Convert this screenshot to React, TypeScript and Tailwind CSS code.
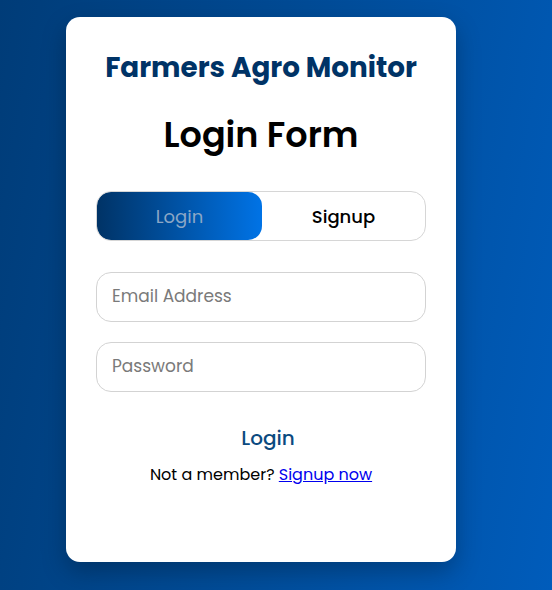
import React from "react";

export default function App() {
  return (
    <div
      className="min-h-[590px] w-full bg-[linear-gradient(100deg,#003c78_0%,#004c98_50%,#005cbb_100%)] pt-[17px] pl-[66px]"
      style={{ fontFamily: "Poppins, Inter, 'Noto Sans', sans-serif" }}
    >
      <div className="w-[390px] h-[545px] rounded-[14px] bg-white shadow-[0_10px_25px_rgba(0,0,0,0.25)] px-[30px] pt-[33px] flex flex-col items-center">
        <h1 className="text-[27.8px] leading-[36px] font-bold text-[#003366]">
          Farmers Agro Monitor
        </h1>
        <h2 className="mt-[24px] text-[35px] leading-[50px] font-semibold text-black">
          Login Form
        </h2>
        <div className="mt-[31px] w-[330px] h-[50px] rounded-[15px] border border-[#d6d6d6] flex overflow-hidden">
          <div className="w-[165px] h-full rounded-[14px] bg-[linear-gradient(to_right,#003366,#0073e6)] flex items-center justify-center text-[18px] text-[#8ba7c6]">
            Login
          </div>
          <div className="flex-1 flex items-center justify-center text-[18px] font-medium text-black">
            Signup
          </div>
        </div>
        <div className="mt-[31px] w-[330px] h-[50px] rounded-[15px] border border-[#d3d3d3] flex items-center px-[15px] text-[17px] text-[#7a7a7a]">
          Email Address
        </div>
        <div className="mt-[20px] w-[330px] h-[50px] rounded-[15px] border border-[#d3d3d3] flex items-center px-[15px] text-[17px] text-[#7a7a7a]">
          Password
        </div>
        <div className="mt-[31px] pl-[14px] text-[20px] leading-[30px] font-medium text-[#0b4a80]">
          Login
        </div>
        <p className="mt-[10px] text-[16px] leading-[24px] text-black">
          Not a member?{" "}
          <a href="#" className="text-[#0000ee] underline">
            Signup now
          </a>
        </p>
      </div>
    </div>
  );
}
